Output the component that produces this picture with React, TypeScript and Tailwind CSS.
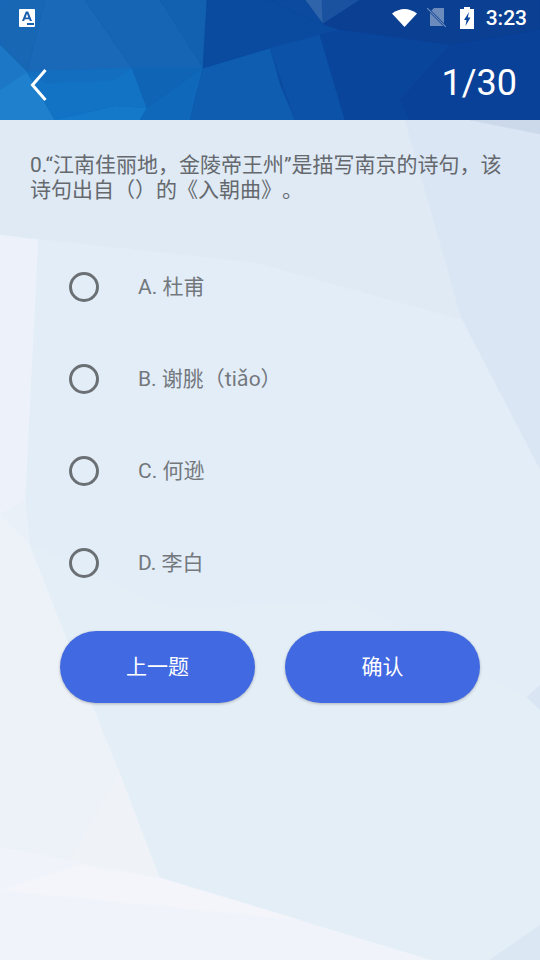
import React from "react";

const options = ["A. 杜甫", "B. 谢朓（tiǎo）", "C. 何逊", "D. 李白"];

const headerShards: [string, string][] = [
  ["0,0 45,0 27,72 0,45", "#1767b5"],
  ["45,0 85,0 132,68 27,72", "#1969b8"],
  ["85,0 160,0 205,68 132,68", "#1565b4"],
  ["160,0 207,0 203,68", "#1260b0"],
  ["0,45 27,72 0,90", "#1c78c7"],
  ["0,90 27,72 55,120 0,120", "#1f80cd"],
  ["27,72 132,68 147,108 115,106 55,120", "#1272c4"],
  ["27,72 132,68 115,80 45,83", "#136ebf"],
  ["55,120 115,106 147,108 140,120", "#1579ca"],
  ["132,68 203,68 147,108", "#0f64b5"],
  ["147,108 203,68 190,120 140,120", "#1068ba"],
  ["203,68 270,48 280,85 295,120 190,120", "#0e5db0"],
  ["207,0 270,0 310,20 270,48 203,68", "#0a4a9f"],
  ["270,48 320,35 345,120 295,120", "#0c52a8"],
  ["305,0 322,0 323,24", "#2f64aa"],
  ["322,0 360,0 352,5 323,24", "#1a52a0"],
  ["270,0 305,0 323,24 310,20", "#0b4a9e"],
  ["360,0 540,0 540,30 450,45 340,30 323,24", "#0a3f92"],
  ["320,35 340,30 450,45 400,100 410,120 345,120", "#0a459c"],
  ["450,45 540,30 540,120 410,120 400,100", "#0a4198"],
];

const bodyShards: [string, string][] = [
  ["0,120 405,120 462,320 255,263 0,235", "#dfeaf5"],
  ["405,120 540,120 540,470 462,320", "#dae6f4"],
  ["470,120 540,120 540,134", "#ccd9eb"],
  ["0,235 255,263 462,320 540,470 540,685 527,697 350,600 170,610 30,545 25,500 38,240", "#e3edf7"],
  ["0,235 38,240 25,500 0,515", "#edf2fa"],
  ["0,515 25,500 30,545 170,610 90,700", "#e9f0f8"],
  ["0,515 30,545 90,700 120,773 160,878 0,847", "#edf2f9"],
  ["120,773 160,878 70,860", "#eff3f8"],
  ["30,545 170,610 350,600 540,710 540,925 490,960 430,960 160,878 120,773", "#e4eef7"],
  ["527,697 540,685 540,710", "#d9e5f2"],
  ["0,847 160,878 430,960 0,960", "#f0f4fa"],
  ["0,890 80,865 160,878 300,920", "#f3f5fa"],
  ["490,960 540,925 540,960", "#dbe7f3"],
];

const Radio = () => <span className="size-[30px] rounded-full border-[3px] border-[#6b7075]" />;

export default function App() {
  return (
    <div
      className="relative w-[540px] h-[960px] overflow-hidden bg-[#e4eef7]"
      style={{ fontFamily: "Roboto, 'Noto Sans CJK SC', sans-serif" }}
    >
      {/* low poly backdrop, same coordinates as the page */}
      <svg className="absolute inset-0" width="540" height="960" viewBox="0 0 540 960">
        {bodyShards.map(([points, fill]) => (
          <polygon key={points} points={points} fill={fill} stroke={fill} strokeWidth="0.5" />
        ))}
      </svg>

      <header className="relative h-[120px] bg-[#0a4a9f] overflow-hidden">
        <svg className="absolute inset-0" width="540" height="120" viewBox="0 0 540 120">
          {headerShards.map(([points, fill]) => (
            <polygon key={points} points={points} fill={fill} stroke={fill} strokeWidth="0.5" />
          ))}
        </svg>
        <div className="relative h-[35px] flex items-center pl-[19px] pr-[13px] text-white">
          <svg width="16" height="18" viewBox="0 0 16 18">
            <rect width="16" height="18" rx="1" fill="#fff" />
            <path d="M3 12 L6.8 2.5 H9.2 L13 12 H10.8 L10.2 10.2 H5.8 L5.2 12 Z M6.6 8.4 H9.4 L8 4.8 Z" fill="#1a5fae" fillRule="evenodd" />
            <path d="M8 14 h7 v2 h-7 Z" fill="#1a5fae" />
          </svg>
          <div className="flex-grow" />
          <svg width="25" height="19" viewBox="0 0 25 19" className="mr-[10px]">
            <path d="M0 5.5 Q12.5 -3.5 25 5.5 L12.5 19 Z" fill="#fff" />
          </svg>
          <svg width="19" height="19" viewBox="0 0 19 19" className="mr-[14px]">
            <path d="M7 0 H17 V18 H3 V4 Z" fill="#fff" fillOpacity="0.4" />
            <path d="M0.5 0.5 L18.5 18.5" stroke="#0a3f92" strokeWidth="2.5" />
            <path d="M0 0 L19 19" stroke="#fff" strokeOpacity="0.4" strokeWidth="1.2" />
          </svg>
          <svg width="14" height="22" viewBox="0 0 14 22" className="mr-[12px]">
            <path d="M4 0 H10 V2 H14 V22 H0 V2 H4 Z" fill="#fff" />
            <path d="M9 5 L4 13 H6.5 L5.5 19 L10.5 10.5 H7.8 Z" fill="#0a459c" />
          </svg>
          <span className="text-[21px] leading-none font-medium mt-[1px]">3:23</span>
        </div>
        <div className="relative h-[85px] pt-[15px] flex items-center justify-between pl-[30px] pr-[23px] text-white">
          <svg width="17" height="32" viewBox="0 0 17 32">
            <path d="M15.5 1 L2.5 16 L15.5 31" fill="none" stroke="#fff" strokeWidth="3" />
          </svg>
          <span className="text-[36px] leading-none mt-[-4px]">1/30</span>
        </div>
      </header>

      <main className="relative [text-spacing-trim:space-all]">
        <p className="px-[30px] pt-[33px] text-[21px] leading-[25px] text-[#65696e]">
          0.“江南佳丽地，金陵帝王州”是描写南京的诗句，该诗句出自（）的《入朝曲》。
        </p>
        <div className="mt-[38px] flex flex-col">
          {options.map((option) => (
            <label key={option} className="h-[92px] flex items-center pl-[69px] gap-[39px]">
              <Radio />
              <span className="text-[21px] text-[#73787d] mt-[2px]">{option}</span>
            </label>
          ))}
        </div>
        <div className="mt-[22px] flex justify-center gap-[30px]">
          {["上一题", "确认"].map((label) => (
            <button
              key={label}
              className="w-[195px] h-[72px] pt-[2px] rounded-full bg-[#4169e1] text-white text-[21px] shadow-[0_1px_3px_rgba(0,0,0,0.25)]"
            >
              {label}
            </button>
          ))}
        </div>
      </main>
    </div>
  );
}
